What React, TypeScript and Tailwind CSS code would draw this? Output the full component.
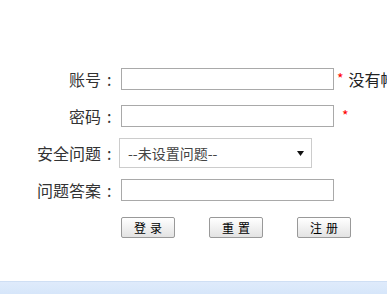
import React from 'react';

const FONT = { fontFamily: '"Noto Sans CJK SC", "Microsoft YaHei", sans-serif' };

const Label: React.FC<{ text: string }> = ({ text }) => (
  <div className="flex w-[117px] shrink-0 items-center justify-end text-[16px] leading-none text-[#333]">
    <span>{text}</span>
    <span className="inline-block w-[16px] pl-[6px] text-left">:</span>
  </div>
);

const TextInput: React.FC<{ type?: string }> = ({ type = 'text' }) => (
  <input
    type={type}
    className="ml-[4px] h-[22px] w-[213px] shrink-0 border border-[#a9a9a9] bg-white px-1 text-[14px] outline-none"
  />
);

const Btn: React.FC<{ a: string; b: string }> = ({ a, b }) => (
  <button className="flex h-[21px] w-[54px] items-center justify-center gap-[4px] rounded-[2px] border border-[#999] bg-gradient-to-b from-[#ffffff] to-[#e3e3e3] text-[12px] leading-none text-black">
    <span>{a}</span>
    <span>{b}</span>
  </button>
);

export default function App() {
  return (
    <div className="flex h-[294px] w-[387px] flex-col overflow-hidden bg-white" style={FONT}>
      <div className="flex flex-col pt-[60px]">
        {/* 账号 */}
        <div className="flex h-[37px] items-center whitespace-nowrap">
          <Label text="账号" />
          <TextInput />
          <span className="ml-[3px] self-start pt-[11px] text-[14px] leading-none text-[#ff0000]">*</span>
          <span className="ml-[5px] text-[16px] leading-none text-[#222]">没有帐号？</span>
        </div>

        {/* 密码 */}
        <div className="flex h-[37px] items-center whitespace-nowrap">
          <Label text="密码" />
          <TextInput type="password" />
          <span className="ml-[8px] self-start pt-[11px] text-[14px] leading-none text-[#ff0000]">*</span>
        </div>

        {/* 安全问题 */}
        <div className="flex h-[37px] items-center whitespace-nowrap">
          <Label text="安全问题" />
          <div className="ml-[2px] flex h-[30px] w-[193px] shrink-0 items-center justify-between border border-[#cccccc] bg-white pl-[8px] pr-[7px]">
            <span className="text-[14px] leading-none text-[#444]">--未设置问题--</span>
            <svg width="7" height="5" viewBox="0 0 7 5" className="mt-[1px]">
              <path d="M0 0 H7 L3.5 5 Z" fill="#111" />
            </svg>
          </div>
        </div>

        {/* 问题答案 */}
        <div className="flex h-[37px] items-center whitespace-nowrap">
          <Label text="问题答案" />
          <TextInput />
        </div>

        {/* 按钮 */}
        <div className="flex h-[37px] items-center gap-[34px] pl-[121px] pt-[2px]">
          <Btn a="登" b="录" />
          <Btn a="重" b="置" />
          <Btn a="注" b="册" />
        </div>
      </div>

      <div className="flex-1" />

      <div className="h-[13px] shrink-0 border-t border-[#cfdff4] bg-gradient-to-b from-[#dfebfb] to-[#d6e6fa]" />
    </div>
  );
}
